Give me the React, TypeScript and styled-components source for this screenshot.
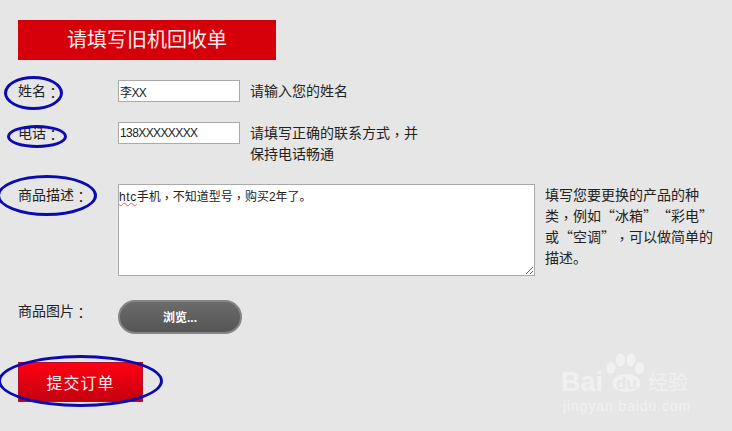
import React from "react";
import styled, { createGlobalStyle } from "styled-components";

const GlobalStyles = createGlobalStyle`
  html,
  body {
    margin: 0;
  }

  body {
    font-family: "Liberation Sans", "Noto Sans CJK SC", sans-serif;
    background: #e6e6e6;
  }
`;

const cjkFont = `"Noto Sans CJK SC", sans-serif`;

const Page = styled.div`
  position: relative;
  width: 732px;
  height: 431px;
  overflow: hidden;
  box-sizing: border-box;
  padding: 20px 0 0 18px;
  background: #e6e6e6;
  color: #222;
`;

const Title = styled.h1`
  width: 258px;
  height: 40px;
  margin: 0 0 20px;
  background: #d6000a;
  color: #f6eeee;
  font-size: 20px;
  font-weight: 400;
  line-height: 40px;
  text-align: center;
`;

const Row = styled.div<{ $gap: number }>`
  display: flex;
  align-items: flex-start;
  margin-bottom: ${p => p.$gap}px;
`;

const Label = styled.label`
  flex: 0 0 100px;
  font-family: ${cjkFont};
  font-size: 14px;
  line-height: 21px;
`;

// centred comma and colon, as the original font draws them
const Mark = styled.span`
  display: inline-block;
  font-family: "Noto Sans CJK TC", sans-serif;
  transform: translateY(2px);
`;

const TextInput = styled.input`
  box-sizing: border-box;
  width: 122px;
  height: 22px;
  margin: 0;
  padding: 0 1px;
  border: 1px solid #aaa;
  border-radius: 0;
  background: #fff;
  color: #222;
  font-family: inherit;
  font-size: 12px;
  letter-spacing: -0.6px;
  outline: none;
`;

const TextArea = styled.div`
  box-sizing: border-box;
  width: 417px;
  height: 92px;
  padding: 2px 0;
  border: 1px solid #aaa;
  background: #fff;
  font-size: 12px;
  line-height: 17px;
  overflow: auto;
  resize: both;
`;

const Misspelled = styled.span`
  letter-spacing: 0.6px;
  text-decoration: underline wavy #e56060 1px;
`;

const Hint = styled.p`
  margin: 0 0 0 10px;
  font-family: ${cjkFont};
  font-size: 14px;
  line-height: 21px;
  text-spacing-trim: space-all;
  font-kerning: none;
`;

const BrowseButton = styled.button`
  box-sizing: border-box;
  width: 124px;
  height: 34px;
  padding: 0 0 2px;
  border: 2px solid #858585;
  border-radius: 17px;
  background: linear-gradient(#6b6b6b, #555);
  color: #fff;
  font-family: inherit;
  font-size: 12px;
  font-weight: 700;
`;

const SubmitButton = styled.button`
  display: block;
  box-sizing: border-box;
  width: 125px;
  height: 40px;
  padding: 0;
  border: 1px solid #b0102c;
  background: linear-gradient(#ff0012, #c40010);
  color: #f8eeee;
  font-family: inherit;
  font-size: 16px;
  letter-spacing: 1px;
`;

const Ring = styled.span<{ $x: number; $y: number; $w: number; $h: number }>`
  position: absolute;
  left: ${p => p.$x}px;
  top: ${p => p.$y}px;
  width: ${p => p.$w}px;
  height: ${p => p.$h}px;
  box-sizing: border-box;
  border: 3px solid #0a0ab0;
  border-radius: 50%;
  pointer-events: none;
`;

const Watermark = styled.div`
  position: absolute;
  left: 561px;
  top: 352px;
  width: 132px;
  color: rgba(255, 255, 255, 0.45);
`;

const Brand = styled.div`
  display: flex;
  align-items: flex-end;
  height: 41px;
  font-size: 27px;
  font-weight: 700;
  line-height: 22px;
`;

const Paw = styled.svg`
  flex: none;
  width: 40px;
  height: 41px;
  margin: 0 3px 0 2px;
`;

const PawText = styled.text`
  fill: #e6e6e6;
  font-family: "Liberation Sans", sans-serif;
  font-size: 17px;
  font-weight: 700;
  text-anchor: middle;
`;

const BrandCn = styled.span`
  font-family: ${cjkFont};
  font-size: 20px;
  font-weight: 400;
`;

const Domain = styled.div`
  margin: 6px 0 0 2px;
  font-size: 14px;
  letter-spacing: 0.9px;
  line-height: 14px;
`;

const App: React.FC = () => {
  return (
    <Page>
      <GlobalStyles />
      <Title>请填写旧机回收单</Title>

      <Row $gap={20}>
        <Label>
          姓名<Mark>：</Mark>
        </Label>
        <TextInput defaultValue="李XX" />
        <Hint>请输入您的姓名</Hint>
      </Row>

      <Row $gap={20}>
        <Label>
          电话<Mark>：</Mark>
        </Label>
        <TextInput defaultValue="138XXXXXXXX" />
        <Hint>
          请填写正确的联系方式<Mark>，</Mark>并
          <br />
          保持电话畅通
        </Hint>
      </Row>

      <Row $gap={24}>
        <Label>
          商品描述<Mark>：</Mark>
        </Label>
        <TextArea>
          <Misspelled>htc</Misspelled>手机<Mark>，</Mark>不知道型号<Mark>，</Mark>购买2年了。
        </TextArea>
        <Hint>
          填写您要更换的产品的种
          <br />
          类<Mark>，</Mark>例如“冰箱”“彩电”
          <br />
          或“空调”<Mark>，</Mark>可以做简单的
          <br />
          描述。
        </Hint>
      </Row>

      <Row $gap={28}>
        <Label>
          商品图片<Mark>：</Mark>
        </Label>
        <BrowseButton>浏览...</BrowseButton>
      </Row>

      <SubmitButton>提交订单</SubmitButton>

      <Ring $x={4} $y={76} $w={59} $h={34} />
      <Ring $x={7} $y={125} $w={60} $h={23} />
      <Ring $x={-3} $y={175} $w={100} $h={41} />
      <Ring $x={-2} $y={355} $w={165} $h={52} />

      <Watermark>
        <Brand>
          Bai
          <Paw viewBox="0 0 40 41">
            <ellipse cx="6" cy="16" rx="4.5" ry="6" fill="currentColor" />
            <ellipse cx="15.5" cy="8" rx="4.5" ry="6.5" fill="currentColor" />
            <ellipse cx="26" cy="8" rx="4.5" ry="6.5" fill="currentColor" />
            <ellipse cx="34.5" cy="16" rx="4.5" ry="6" fill="currentColor" />
            <ellipse cx="21.5" cy="31" rx="14" ry="9" fill="currentColor" />
            <PawText x="21.5" y="37">
              du
            </PawText>
          </Paw>
          <BrandCn>经验</BrandCn>
        </Brand>
        <Domain>jingyan.baidu.com</Domain>
      </Watermark>
    </Page>
  );
};

export default App;
